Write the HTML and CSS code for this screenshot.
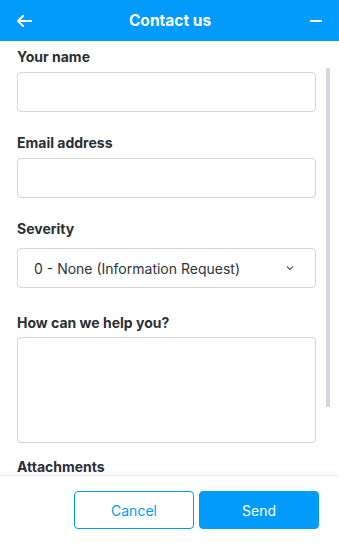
FILE: index.html
```html
<!DOCTYPE html>
<html>
<head>
<meta charset="utf-8">
<link rel="stylesheet" href="styles.css">
</head>
<body>
<div class="widget">
  <header class="topbar">
    <button class="icon-btn" aria-label="Back">
      <svg width="16" height="14" viewBox="0 0 16 14"><path d="M15 7H2M7 2L2 7l5 5" fill="none" stroke="#fff" stroke-width="2" stroke-linecap="round" stroke-linejoin="round"/></svg>
    </button>
    <h1 class="title">Contact us</h1>
    <button class="icon-btn" aria-label="Minimize">
      <svg width="14" height="14" viewBox="0 0 14 14"><path d="M1 7h12" stroke="#fff" stroke-width="2"/></svg>
    </button>
  </header>
  <main class="body">
    <form class="form">
      <div class="field">
        <label class="label">Your name</label>
        <div class="input"></div>
      </div>
      <div class="field">
        <label class="label">Email address</label>
        <div class="input"></div>
      </div>
      <div class="field field-severity">
        <label class="label">Severity</label>
        <div class="input select">
          <span>0 - None (Information Request)</span>
          <svg width="8" height="6" viewBox="0 0 8 6"><path d="M1 1.5l3 3 3-3" fill="none" stroke="#666" stroke-width="1.3"/></svg>
        </div>
      </div>
      <div class="field field-help">
        <label class="label">How can we help you?</label>
        <div class="input textarea"></div>
      </div>
      <div class="field">
        <label class="label">Attachments</label>
      </div>
    </form>
    <div class="scroll-thumb"></div>
  </main>
  <footer class="footer">
    <button class="btn btn-outline">Cancel</button>
    <button class="btn btn-primary">Send</button>
  </footer>
</div>
</body>
</html>
```
FILE: styles.css
```css
* { box-sizing: border-box; }
html, body { margin: 0; padding: 0; height: 100%; }
body {
  font-family: Inter, "Noto Sans", "Liberation Sans", sans-serif;
  background: #fff;
  color: #2b2f33;
}
.widget {
  width: 339px;
  height: 543px;
  display: flex;
  flex-direction: column;
  overflow: hidden;
}
.topbar {
  height: 41px;
  flex: none;
  background: #039bfa;
  display: flex;
  align-items: center;
  justify-content: space-between;
  padding: 0 15px 0 16px;
}
.icon-btn {
  background: none;
  border: 0;
  padding: 0;
  width: 16px;
  height: 16px;
  display: flex;
  align-items: center;
  justify-content: center;
}
.title {
  margin: 0;
  color: #fff;
  font-size: 15.5px;
  font-weight: 700;
}
.body {
  flex: 1;
  position: relative;
  overflow: hidden;
}
.form {
  padding: 7px 23px 0 17px;
}
.field { margin-bottom: 22px; }
.label {
  display: block;
  font-size: 14px;
  line-height: 17px;
  font-weight: 700;
  color: #2b2f33;
  margin-bottom: 7px;
}
.input {
  height: 40px;
  border: 1px solid #d3d5d8;
  border-radius: 4px;
  background: #fff;
}
.field-severity .label { margin-bottom: 11px; }
.select {
  height: 40px;
  display: flex;
  align-items: center;
  justify-content: space-between;
  padding: 0 21px 0 16px;
  font-size: 14px;
  color: #30343a;
}
.field-severity { margin-bottom: 26px; }
.field-help { margin-bottom: 15px; }
.field-help .label { margin-bottom: 6px; }
.textarea { height: 106px; }
.scroll-thumb {
  position: absolute;
  left: 326px;
  top: 27px;
  width: 4px;
  height: 339px;
  background: #d5d7da;
}
.footer {
  height: 68px;
  flex: none;
  border-top: 1px solid #ececec;
  box-shadow: 0 -3px 5px rgba(0,0,0,0.03);
  display: flex;
  justify-content: flex-end;
  align-items: flex-start;
  gap: 5px;
  padding: 15px 20px 0 0;
  position: relative;
  background: #fff;
}
.btn {
  width: 120px;
  height: 38px;
  border-radius: 4px;
  font-family: Inter, "Noto Sans", "Liberation Sans", sans-serif;
  font-size: 14px;
  cursor: pointer;
}
.btn-outline {
  background: #fff;
  border: 1px solid #039bfa;
  color: #039bfa;
}
.btn-primary {
  background: #039bfa;
  border: 1px solid #039bfa;
  color: #fff;
}
```
